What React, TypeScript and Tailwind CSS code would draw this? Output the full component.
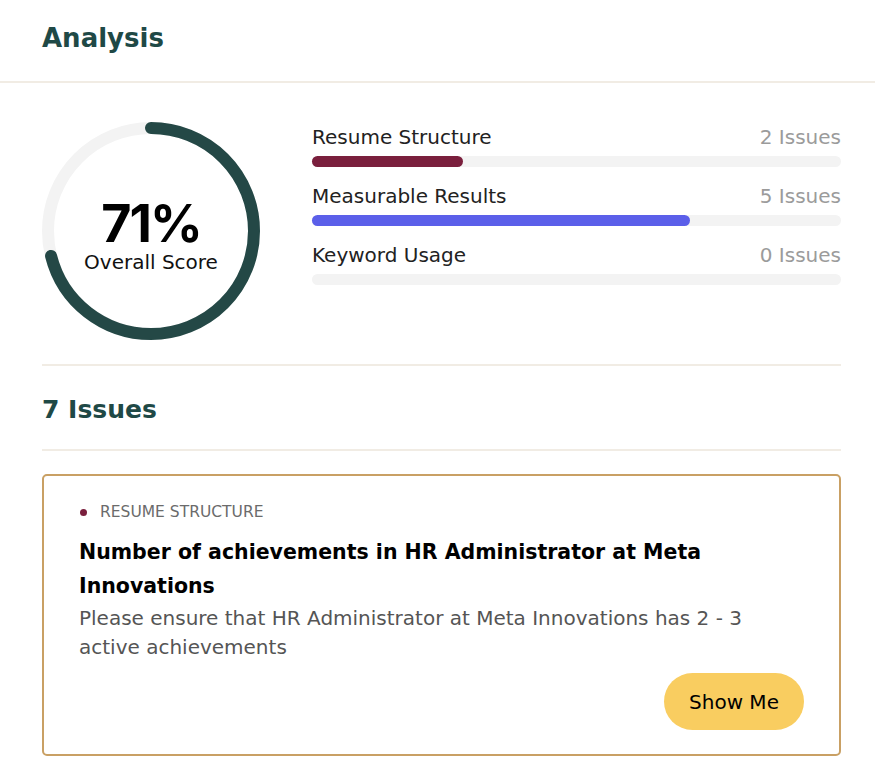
import React from 'react'

const categories = [
  { name: 'Resume Structure', issues: 2, pct: 28.6, color: 'bg-[#7a1f3d]' },
  { name: 'Measurable Results', issues: 5, pct: 71.5, color: 'bg-[#5b5fe9]' },
  { name: 'Keyword Usage', issues: 0, pct: 0, color: 'bg-[#5b5fe9]' },
]

function ScoreRing({ score }: { score: number }) {
  const r = 103
  const c = 2 * Math.PI * r
  return (
    <div className="relative w-[218px] h-[218px] shrink-0">
      <svg width="218" height="218" viewBox="0 0 218 218" className="-rotate-90">
        <circle cx="109" cy="109" r={r} fill="none" stroke="#f3f3f3" strokeWidth="12" />
        <circle
          cx="109"
          cy="109"
          r={r}
          fill="none"
          stroke="#244846"
          strokeWidth="12"
          strokeLinecap="round"
          strokeDasharray={`${(c * score) / 100} ${c}`}
        />
      </svg>
      <div className="absolute inset-0 flex flex-col items-center justify-center pt-[12px]">
        <span className="font-['Inter',sans-serif] text-[52px] leading-[50px] font-bold tracking-[-2px] text-black">
          {score}%
        </span>
        <span className="text-[20px] leading-[26px] text-[#111]">Overall Score</span>
      </div>
    </div>
  )
}

export default function App() {
  return (
    <div className="min-h-screen bg-white font-['DejaVu_Sans',sans-serif] text-[#222]">
      <header className="border-b-2 border-[#f1ece4] pl-[42px] pt-[19px] pb-[24px]">
        <h1 className="text-[26px] leading-[38px] font-bold text-[#1f4946]">Analysis</h1>
      </header>

      <div className="pl-[42px] pr-[34px]">
        <section className="flex items-start gap-[52px] pt-[39px] pb-[24px] border-b-2 border-[#f1ece4]">
          <ScoreRing score={71} />
          <div className="flex-1 flex flex-col gap-[12px] mt-[-2px]">
            {categories.map((cat) => (
              <div key={cat.name}>
                <div className="flex justify-between items-center h-[34px]">
                  <span className="text-[20px] text-[#222]">{cat.name}</span>
                  <span className="text-[20px] text-[#9b9b9b]">{cat.issues} Issues</span>
                </div>
                <div className="h-[11px] rounded-full bg-[#f3f3f3] mt-[2px]">
                  {cat.pct > 0 && (
                    <div className={`h-full rounded-full ${cat.color}`} style={{ width: `${cat.pct}%` }} />
                  )}
                </div>
              </div>
            ))}
          </div>
        </section>

        <div className="border-b-2 border-[#f1ece4] pt-[26px] pb-[21px]">
          <h2 className="text-[25px] leading-[36px] font-bold text-[#1f4946]">7 Issues</h2>
        </div>

        <div className="mt-[23px] border-2 border-[#c9a064] rounded-[5px] pl-[35px] pr-[35px] pt-[24px] pb-[24px]">
          <div className="flex items-center gap-[13px]">
            <span className="w-[7px] h-[7px] rounded-full bg-[#7a1f3d] ml-[1px]" />
            <span className="text-[15.5px] leading-[24px] text-[#6b6b6b] uppercase">Resume Structure</span>
          </div>
          <h3 className="mt-[11px] text-[20.5px] leading-[34px] font-bold text-black">
            Number of achievements in HR Administrator at Meta Innovations
          </h3>
          <p className="mt-[1px] text-[20px] leading-[29px] text-[#555] max-w-[710px]">
            Please ensure that HR Administrator at Meta Innovations has 2 - 3 active achievements
          </p>
          <div className="flex justify-end mt-[11px]">
            <button className="w-[140px] h-[57px] rounded-full bg-[#f9cd60] text-[20px] text-black">
              Show Me
            </button>
          </div>
        </div>
      </div>
    </div>
  )
}
